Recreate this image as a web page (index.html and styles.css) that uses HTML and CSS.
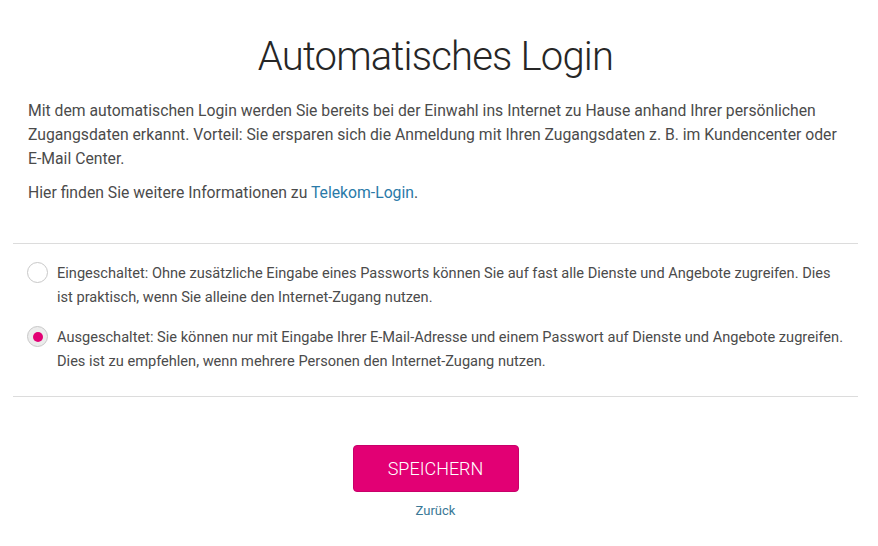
FILE: index.html
```html
<!DOCTYPE html>
<html lang="de">
<head>
<meta charset="utf-8">
<title>Automatisches Login</title>
<link rel="stylesheet" href="styles.css">
</head>
<body>
<main class="page">
  <h1 class="title">Automatisches Login</h1>
  <div class="intro">
    <p>Mit dem automatischen Login werden Sie bereits bei der Einwahl ins Internet zu Hause anhand Ihrer persönlichen Zugangsdaten erkannt. Vorteil: Sie ersparen sich die Anmeldung mit Ihren Zugangsdaten z. B. im Kundencenter oder E-Mail Center.</p>
    <p>Hier finden Sie weitere Informationen zu <a class="link" href="#">Telekom-Login</a>.</p>
  </div>
  <section class="options">
    <label class="option">
      <span class="radio"></span>
      <span class="option-text">Eingeschaltet: Ohne zusätzliche Eingabe eines Passworts können Sie auf fast alle Dienste und Angebote zugreifen. Dies ist praktisch, wenn Sie alleine den Internet-Zugang nutzen.</span>
    </label>
    <label class="option">
      <span class="radio checked"></span>
      <span class="option-text">Ausgeschaltet: Sie können nur mit Eingabe Ihrer E-Mail-Adresse und einem Passwort auf Dienste und Angebote zugreifen. Dies ist zu empfehlen, wenn mehrere Personen den Internet-Zugang nutzen.</span>
    </label>
  </section>
  <div class="actions">
    <button class="btn-save" type="button">SPEICHERN</button>
    <a class="back" href="#">Zurück</a>
  </div>
</main>
</body>
</html>
```

FILE: styles.css
```css
html, body {
  margin: 0;
  padding: 0;
  background: #ffffff;
}
body {
  font-family: Roboto, "Liberation Sans", Arial, sans-serif;
  color: #4b4b4b;
  font-size: 15.74px;
  line-height: 24px;
}
.page {
  margin: 0 20px 0 13px;
  padding-top: 29px;
}
.title {
  margin: 0;
  text-align: center;
  font-weight: 300;
  font-size: 40px;
  line-height: 56px;
  color: #262626;
  letter-spacing: -0.8px;
}
.intro {
  padding: 14px 8px 0 15px;
}
.intro p {
  margin: 0 0 10px 0;
}
.link {
  color: #2a7aa8;
  text-decoration: none;
}
.options {
  margin-top: 38px;
  border-top: 1px solid #dcdcdc;
  border-bottom: 1px solid #dcdcdc;
  padding: 17px 0 23px 14px;
  display: flex;
  flex-direction: column;
  gap: 16px;
  font-size: 14.6px;
}
.option {
  display: flex;
  align-items: flex-start;
  gap: 9px;
  padding-right: 11px;
}
.radio {
  flex: none;
  width: 19px;
  height: 19px;
  border: 1.5px solid #c8c8c8;
  border-radius: 50%;
  margin-top: 1px;
  box-sizing: content-box;
  display: flex;
  align-items: center;
  justify-content: center;
  background: #fff;
}
.radio.checked {
  background: #ececec;
}
.radio.checked::after {
  content: "";
  width: 10px;
  height: 10px;
  border-radius: 50%;
  background: #e20074;
}
.actions {
  display: flex;
  flex-direction: column;
  align-items: center;
  padding-top: 48px;
}
.btn-save {
  width: 166px;
  height: 47px;
  background: #e20074;
  border: 1px solid #c8006a;
  border-radius: 4px;
  color: #ffffff;
  font-family: Roboto, "Liberation Sans", Arial, sans-serif;
  font-size: 18px;
  font-weight: 300;
  padding: 0;
  cursor: pointer;
}
.back {
  margin-top: 9px;
  color: #3a7896;
  font-size: 13px;
  text-decoration: none;
  line-height: 20px;
}
```
